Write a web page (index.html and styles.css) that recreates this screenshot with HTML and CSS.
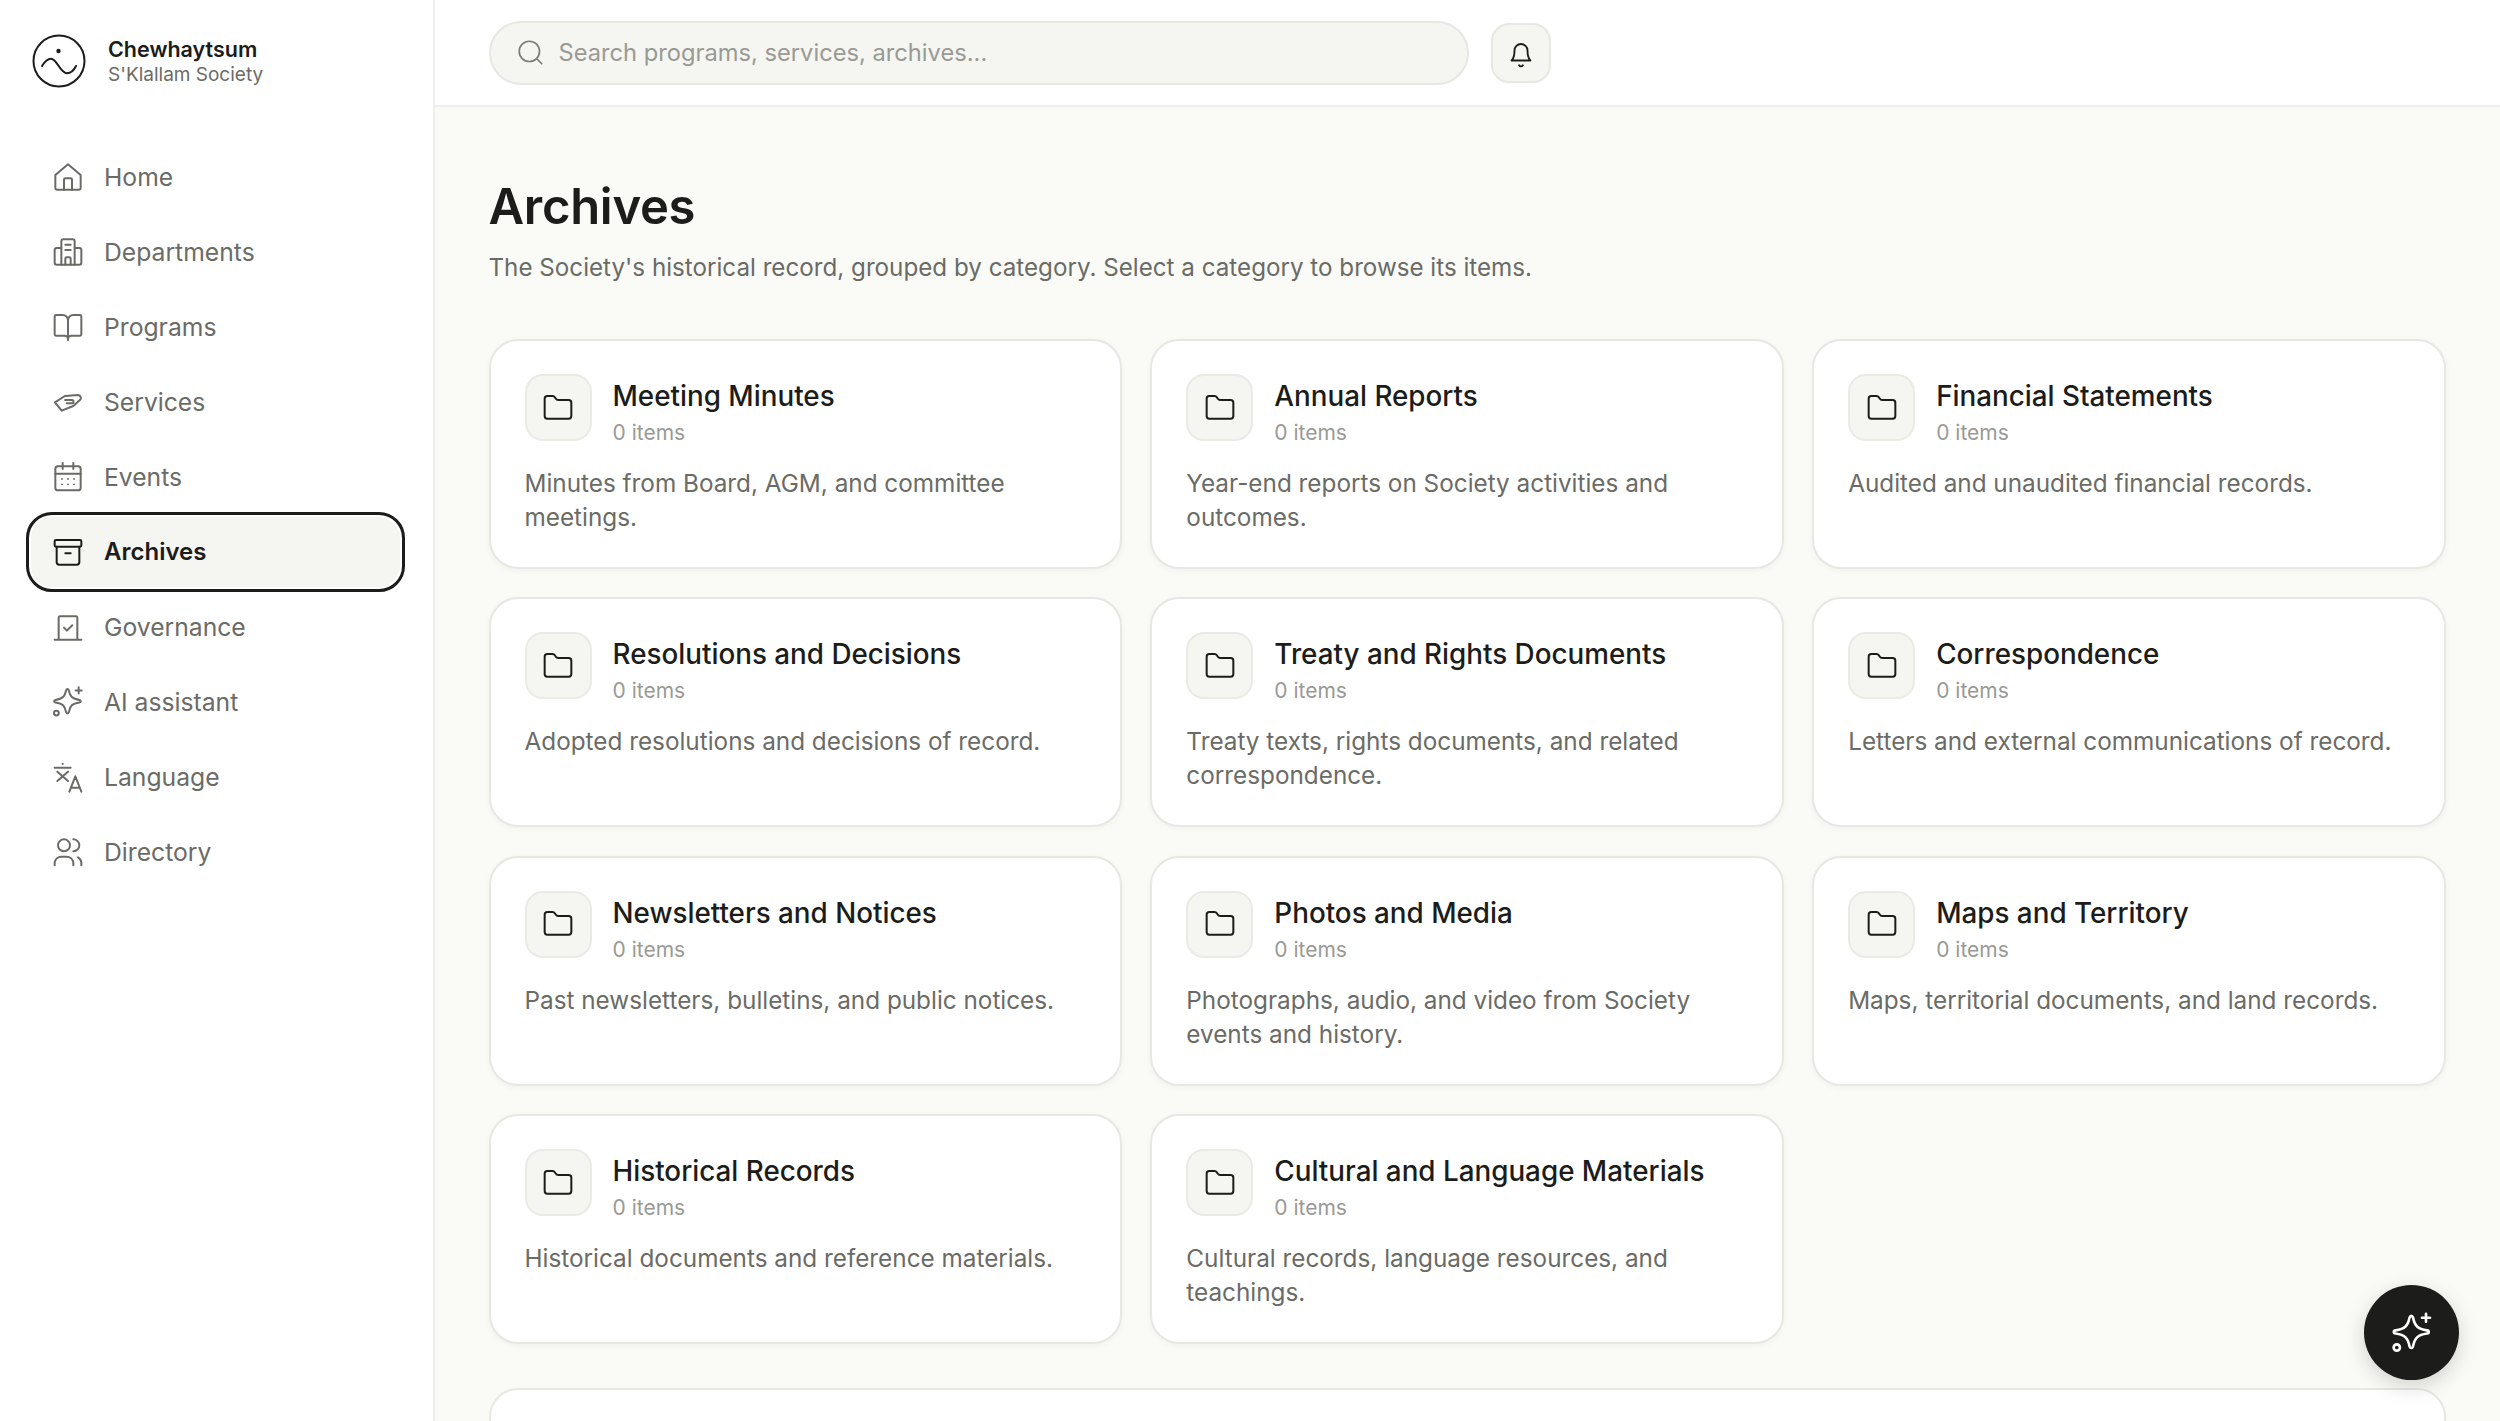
FILE: index.html
```html
<!DOCTYPE html>
<html lang="en">
<head>
    <meta charset="UTF-8">
    <meta name="viewport" content="width=device-width, initial-scale=1.0">
    <title>Archives</title>
    <link rel="stylesheet" href="styles.css">
</head>
<body>
    <svg class="defs" width="0" height="0">
        <symbol id="folder" viewBox="0 0 24 24"><path d="M20 20a2 2 0 0 0 2-2V8a2 2 0 0 0-2-2h-7.900a2 2 0 0 1-1.690-.9L9.600 3.900A2 2 0 0 0 7.930 3H4a2 2 0 0 0-2 2v13a2 2 0 0 0 2 2Z"/></symbol>
        <symbol id="sparkle" viewBox="0 0 24 24"><path d="M11.600 2.200c.5 0 .8.400 1 1 .9 4.700 2.600 6.500 8 7.300.7.100 1 .5 1 .9s-.3.800-1 .9c-5.400.8-7.100 2.600-8 7.300-.2.600-.5 1-1 1s-.8-.4-1-1c-.9-4.700-2.600-6.500-8-7.300-.7-.1-1-.5-1-.9s.3-.8 1-.9c5.400-.8 7.100-2.600 8-7.300.2-.6.5-1 1-1Z"/><path d="M20 1v4.600M17.700 3.300h4.600"/><circle cx="3.300" cy="20.300" r="1.800"/></symbol>
    </svg>

    <div class="app">
        <aside class="sidebar">
            <div class="brand">
                <svg class="brand-logo" viewBox="0 0 54 54"><circle cx="27" cy="27" r="25.500"/><circle class="dot" cx="26.500" cy="17" r="2.200"/><path d="M10 32c3-5 6-7.300 9-7.300 6 0 9 14.600 16 14.600 4 0 7-3.300 9-7.300"/></svg>
                <div>
                    <div class="brand-name">Chewhaytsum</div>
                    <div class="brand-sub">S'Klallam Society</div>
                </div>
            </div>
            <nav class="nav">
                <a class="nav-item"><svg viewBox="0 0 24 24"><path d="M2.500 10.500 12 2.500l9.500 8V20a1.500 1.500 0 0 1-1.500 1.500H4A1.500 1.500 0 0 1 2.500 20Z"/><path d="M9 21.500V14a1 1 0 0 1 1-1h4a1 1 0 0 1 1 1v7.500"/></svg>Home</a>
                <a class="nav-item"><svg viewBox="0 0 24 24"><path d="M7 21.500V4a1.500 1.500 0 0 1 1.500-1.500h7A1.500 1.500 0 0 1 17 4v17.500"/><path d="M7 9H3.500A1.500 1.500 0 0 0 2 10.500V20a1.500 1.500 0 0 0 1.500 1.500h17A1.500 1.500 0 0 0 22 20v-9.500A1.500 1.500 0 0 0 20.500 9H17"/><path d="M10 6.500h4M10 10.500h4M10 21.500V17a1 1 0 0 1 1-1h2a1 1 0 0 1 1 1v4.500"/></svg>Departments</a>
                <a class="nav-item"><svg viewBox="0 0 24 24"><path d="M12 7v15"/><path d="M3 18.500a1 1 0 0 1-1-1V4a1 1 0 0 1 1-1h5a4 4 0 0 1 4 4 4 4 0 0 1 4-4h5a1 1 0 0 1 1 1v13.500a1 1 0 0 1-1 1h-6.500a2.500 2.500 0 0 0-2.500 2.500 2.500 2.500 0 0 0-2.500-2.500Z"/></svg>Programs</a>
                <a class="nav-item"><svg viewBox="0 0 24 24"><path d="M7.300 18.500 2.200 12.300 9.700 7.500l9.800-.7c1.500 0 2.500 1.500 2 3.200L16 15l-8.700 3.500"/><path d="M9.800 10.500H15c1.500 0 1.500 2.500 0 2.500h-4"/></svg>Services</a>
                <a class="nav-item"><svg viewBox="0 0 24 24"><rect x="2.500" y="4" width="19" height="18" rx="2"/><path d="M2.500 9.500h19M8 1.500V6M16 1.500V6"/><path class="dots" d="M7.500 13.500h.01M12 13.500h.01M16.500 13.500h.01M7.500 17.500h.01M12 17.500h.01M16.500 17.500h.01"/></svg>Events</a>
                <a class="nav-item active"><svg viewBox="0 0 24 24"><rect x="2" y="3" width="20" height="5" rx="1"/><path d="M3.500 8v11.500a2 2 0 0 0 2 2h13a2 2 0 0 0 2-2V8M10 13h4"/></svg>Archives</a>
                <a class="nav-item"><svg viewBox="0 0 24 24"><path d="M5 20.500V5a1 1 0 0 1 1-1h12a1 1 0 0 1 1 1v15.500M2 21.500h20"/><path d="M9 12.500l2.200 2.200 4-4"/></svg>Governance</a>
                <a class="nav-item"><svg viewBox="0 0 24 24"><use href="#sparkle"/></svg>AI assistant</a>
                <a class="nav-item"><svg viewBox="0 0 24 24"><path d="M2 5h12M8 2v.3M4 8l8 7M12 8l-8 7M13 23l4.500-11.500L22 23M14.500 20h6"/></svg>Language</a>
                <a class="nav-item"><svg viewBox="0 0 24 24"><circle cx="9" cy="7" r="4.500"/><path d="M2 22v-2a5 5 0 0 1 5-4.500h4a5 5 0 0 1 5 4.500v2"/><path d="M16 2.500a4.500 4.500 0 0 1 0 9M19.500 16a5 5 0 0 1 2.500 4v2"/></svg>Directory</a>
            </nav>
        </aside>

        <div class="main">
            <header class="topbar">
                <div class="search">
                    <svg viewBox="0 0 24 24"><circle cx="11" cy="11" r="9"/><path d="m18 18 4 4"/></svg>
                    <span>Search programs, services, archives...</span>
                </div>
                <button class="bell">
                    <svg viewBox="0 0 24 24"><path d="M4.500 18h15c-1.400-1.500-2.300-3-2.300-8a5.200 5.200 0 0 0-10.400 0c0 5-.9 6.500-2.300 8Z"/><path d="M10.500 21.800a1.700 1.700 0 0 0 3 0"/></svg>
                </button>
            </header>

            <main class="content">
                <h1 class="page-title">Archives</h1>
                <p class="page-sub">The Society's historical record, grouped by category. Select a category to browse its items.</p>

                <div class="grid">
                    <div class="card">
                        <div class="card-head">
                            <div class="card-icon"><svg><use href="#folder"/></svg></div>
                            <div class="card-text"><div class="card-title">Meeting Minutes</div><div class="card-count">0 items</div></div>
                        </div>
                        <p class="card-desc">Minutes from Board, AGM, and committee meetings.</p>
                    </div>
                    <div class="card">
                        <div class="card-head">
                            <div class="card-icon"><svg><use href="#folder"/></svg></div>
                            <div class="card-text"><div class="card-title">Annual Reports</div><div class="card-count">0 items</div></div>
                        </div>
                        <p class="card-desc">Year-end reports on Society activities and outcomes.</p>
                    </div>
                    <div class="card">
                        <div class="card-head">
                            <div class="card-icon"><svg><use href="#folder"/></svg></div>
                            <div class="card-text"><div class="card-title">Financial Statements</div><div class="card-count">0 items</div></div>
                        </div>
                        <p class="card-desc">Audited and unaudited financial records.</p>
                    </div>
                    <div class="card">
                        <div class="card-head">
                            <div class="card-icon"><svg><use href="#folder"/></svg></div>
                            <div class="card-text"><div class="card-title">Resolutions and Decisions</div><div class="card-count">0 items</div></div>
                        </div>
                        <p class="card-desc">Adopted resolutions and decisions of record.</p>
                    </div>
                    <div class="card">
                        <div class="card-head">
                            <div class="card-icon"><svg><use href="#folder"/></svg></div>
                            <div class="card-text"><div class="card-title">Treaty and Rights Documents</div><div class="card-count">0 items</div></div>
                        </div>
                        <p class="card-desc">Treaty texts, rights documents, and related correspondence.</p>
                    </div>
                    <div class="card">
                        <div class="card-head">
                            <div class="card-icon"><svg><use href="#folder"/></svg></div>
                            <div class="card-text"><div class="card-title">Correspondence</div><div class="card-count">0 items</div></div>
                        </div>
                        <p class="card-desc">Letters and external communications of record.</p>
                    </div>
                    <div class="card">
                        <div class="card-head">
                            <div class="card-icon"><svg><use href="#folder"/></svg></div>
                            <div class="card-text"><div class="card-title">Newsletters and Notices</div><div class="card-count">0 items</div></div>
                        </div>
                        <p class="card-desc">Past newsletters, bulletins, and public notices.</p>
                    </div>
                    <div class="card">
                        <div class="card-head">
                            <div class="card-icon"><svg><use href="#folder"/></svg></div>
                            <div class="card-text"><div class="card-title">Photos and Media</div><div class="card-count">0 items</div></div>
                        </div>
                        <p class="card-desc">Photographs, audio, and video from Society events and history.</p>
                    </div>
                    <div class="card">
                        <div class="card-head">
                            <div class="card-icon"><svg><use href="#folder"/></svg></div>
                            <div class="card-text"><div class="card-title">Maps and Territory</div><div class="card-count">0 items</div></div>
                        </div>
                        <p class="card-desc">Maps, territorial documents, and land records.</p>
                    </div>
                    <div class="card">
                        <div class="card-head">
                            <div class="card-icon"><svg><use href="#folder"/></svg></div>
                            <div class="card-text"><div class="card-title">Historical Records</div><div class="card-count">0 items</div></div>
                        </div>
                        <p class="card-desc">Historical documents and reference materials.</p>
                    </div>
                    <div class="card">
                        <div class="card-head">
                            <div class="card-icon"><svg><use href="#folder"/></svg></div>
                            <div class="card-text"><div class="card-title">Cultural and Language Materials</div><div class="card-count">0 items</div></div>
                        </div>
                        <p class="card-desc">Cultural records, language resources, and teachings.</p>
                    </div>
                </div>

                <div class="next-panel"></div>
            </main>
        </div>
    </div>

    <button class="fab"><svg viewBox="0 0 24 24"><use href="#sparkle"/></svg></button>
</body>
</html>
```

FILE: styles.css
```css
* {
    box-sizing: border-box;
}

html, body {
    margin: 0;
    height: 100%;
    overflow: hidden;
}

body {
    font-family: "Inter", "Noto Sans", sans-serif;
    color: #1c1c1a;
    background-color: #fafaf7;
}

svg {
    fill: none;
    stroke: currentColor;
    stroke-width: 1.5;
    stroke-linecap: round;
    stroke-linejoin: round;
}

.defs {
    position: absolute;
}

.app {
    display: flex;
    height: 1421px;
}

/* sidebar */
.sidebar {
    width: 435px;
    flex-shrink: 0;
    background-color: #fff;
    border-right: 2px solid #eeeeea;
}

.brand {
    display: flex;
    align-items: center;
    gap: 22px;
    padding: 34px 32px 0;
}

.brand-logo {
    width: 54px;
    height: 54px;
    stroke-width: 2;
}

.brand-logo .dot {
    fill: currentColor;
    stroke: none;
}

.brand-name {
    font-size: 21.500px;
    font-weight: 600;
    line-height: 26px;
}

.brand-sub {
    font-size: 19px;
    line-height: 25px;
    color: #6b6b66;
}

.nav {
    display: flex;
    flex-direction: column;
    gap: 5px;
    padding: 53.500px 28px 0 26px;
}

.nav-item {
    display: flex;
    align-items: center;
    gap: 20px;
    height: 70px;
    padding: 0 26px;
    border-radius: 26px;
    font-size: 24.700px;
    color: #6b6b66;
}

.nav-item svg {
    width: 32px;
    height: 32px;
    flex-shrink: 0;
}

.nav-item .dots {
    stroke-width: 1.4;
}

.nav-item.active {
    height: 80px;
    margin: -5px 0;
    border: 3px solid #1c1c1a;
    padding: 0 23px;
    background-color: #f5f5f1;
    box-shadow: inset 0 0 0 2px #fff;
    color: #1c1c1a;
    font-size: 24px;
    font-weight: 600;
}

/* main column */
.main {
    flex: 1;
    min-width: 0;
    display: flex;
    flex-direction: column;
}

.topbar {
    display: flex;
    align-items: center;
    gap: 22px;
    height: 107px;
    flex-shrink: 0;
    padding: 0 54px 0 53.500px;
    background-color: #fff;
    border-bottom: 2px solid #eeeeea;
}

.search {
    display: flex;
    align-items: center;
    gap: 15px;
    width: 980px;
    height: 64px;
    padding: 0 26px;
    background-color: #f5f5f1;
    border: 2px solid #e8e7e2;
    border-radius: 32px;
    font-size: 23.700px;
    color: #9a9a94;
}

.search svg {
    width: 27px;
    height: 27px;
    color: #7d7d78;
}

.bell {
    display: flex;
    align-items: center;
    justify-content: center;
    width: 60px;
    height: 60px;
    padding: 0;
    background-color: #f5f5f1;
    border: 2px solid #e8e7e2;
    border-radius: 18px;
    color: #1c1c1a;
}

.bell svg {
    width: 30px;
    height: 30px;
}

.content {
    flex: 1;
    padding: 0 54px 0 53.500px;
    overflow: hidden;
}

.page-title {
    margin: 0;
    padding-top: 66px;
    font-size: 49px;
    font-weight: 600;
    letter-spacing: -0.3px;
    line-height: 68px;
}

.page-sub {
    margin: 9px 0 0;
    font-size: 24.200px;
    line-height: 36px;
    color: #6b6b66;
}

.grid {
    display: grid;
    grid-template-columns: repeat(3, 1fr);
    gap: 28.400px 28px;
    margin-top: 53px;
}

.card {
    height: 230px;
    padding: 33px 34px;
    background-color: #fff;
    border: 2px solid #e8e7e2;
    border-radius: 29px;
    box-shadow: 0 2px 6px rgba(28, 28, 26, 0.04);
}

.card-head {
    display: flex;
    gap: 21px;
}

.card-icon {
    display: flex;
    align-items: center;
    justify-content: center;
    width: 67px;
    height: 67px;
    flex-shrink: 0;
    background-color: #f5f5f1;
    border: 2px solid #ebeae5;
    border-radius: 18px;
}

.card-icon svg {
    width: 32px;
    height: 32px;
}

.card-text {
    padding-top: 3px;
}

.card-title {
    font-size: 27.800px;
    font-weight: 500;
    line-height: 38px;
}

.card-count {
    margin-top: 5px;
    font-size: 21px;
    line-height: 26px;
    color: #9a9a94;
}

.card-desc {
    margin: 20px 0 0;
    font-size: 24.300px;
    line-height: 34px;
    color: #6b6b66;
}

.next-panel {
    height: 200px;
    margin-top: 43.800px;
    background-color: #fff;
    border: 2px solid #e8e7e2;
    border-radius: 29px;
}

.fab {
    position: fixed;
    right: 41px;
    bottom: 41px;
    display: flex;
    align-items: center;
    justify-content: center;
    width: 95px;
    height: 95px;
    padding: 0;
    border: 0;
    border-radius: 50%;
    background-color: #1c1c1a;
    color: #fff;
    box-shadow: 0 6px 20px rgba(28, 28, 26, 0.18);
}

.fab svg {
    width: 42px;
    height: 42px;
}
```
